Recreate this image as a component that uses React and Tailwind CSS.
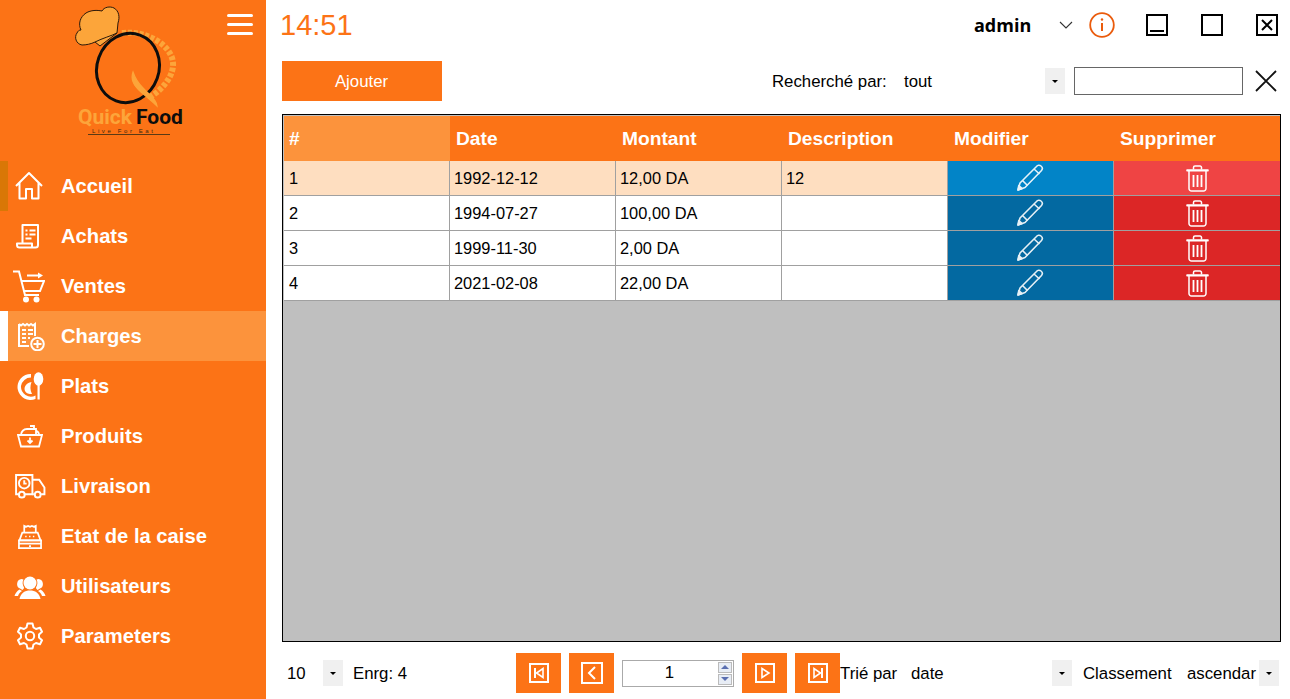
import React from "react";

const S = ({ children, w = 32, h = 32, vb = "0 0 32 32", sw = 2 }) => (
  <svg width={w} height={h} viewBox={vb} fill="none" stroke="white" strokeWidth={sw} strokeLinejoin="round">{children}</svg>
);

const Home = () => (
  <S vb="1 0 32 32"><path d="M3 16 L16 3 L29 16 M6.5 13 V28.5 H13 V19 H19 V28.5 H25.5 V13" /></S>
);
const Receipt = () => (
  <S vb="1.5 0 32 32">
    <path d="M10 23 V5 H25.5 V25 a2.5 2.5 0 0 1 -2.5 2.5 H7 a2.5 2.5 0 0 1 -2.5 -2.5 V23.5 H19.5 V27" />
    <path d="M13 10.5 h2 M17 10.5 h6 M13 14.5 h2 M17 14.5 h6 M13 18.5 h6" />
  </S>
);
const Cart = () => (
  <svg width="32" height="33" viewBox="0 0 32 33" fill="none" stroke="white" strokeWidth="2" className="mr-[3px]">
    <path d="M0 1.5 H6 L12 25 H26" />
    <path d="M8 11 H31 L27 21 H10.5" />
    <circle cx="13" cy="29.5" r="3" fill="white" stroke="none" />
    <circle cx="23.5" cy="29.5" r="3" fill="white" stroke="none" />
    <path d="M14 5.5 H25" />
    <path d="M25 2.5 L30 5.5 L25 8.5 Z" fill="white" stroke="none" />
  </svg>
);
const Charges = () => (
  <svg width="27" height="29" viewBox="0 0 27 29" fill="none" stroke="white" strokeWidth="2" className="ml-[3px]">
    <path d="M1 2 l2 1.5 l2 -1.5 l2 1.5 l2 -1.5 l2 1.5 l2 -1.5 l2 1.5 l2 -1.5 V14 M11 24 H1 V2" />
    <path d="M4 8 h4 M10 8 h5 M4 12 h4 M10 12 h5 M4 16 h4 M10 16 h2 M4 20 h4" />
    <circle cx="19.5" cy="22" r="6.3" />
    <path d="M19.5 18 v8 M15.5 22 h8" />
  </svg>
);
const Plats = () => (
  <svg width="27" height="28" viewBox="0 0 27 28" fill="white">
    <path d="M14 2 A13 13 0 1 0 18.5 27 L18.5 23.5 A10 10 0 0 1 4 14 A10 10 0 0 1 14 5.5 Z" />
    <path d="M14.5 10 C9 11 6.5 15 8 19 C9 21.5 12 22 15 22 C13 18 13 14 14.5 10 Z" />
    <ellipse cx="21.5" cy="7" rx="4.8" ry="6.8" />
    <rect x="20.5" y="13" width="2.2" height="14.5" />
  </svg>
);
const Produits = () => (
  <svg width="26" height="24" viewBox="0 0 26 24" fill="none" stroke="white" strokeWidth="1.8">
    <path d="M1 11 H25 L22 22.5 H4 Z" />
    <path d="M4 11 A6 6 0 0 1 10 5 M10 5 H19 V11 M13 2 H17 V5 M22 11 A5 5 0 0 0 19 6.5" />
    <path d="M13 13.5 V19 M10.5 16.5 L13 19 L15.5 16.5" />
  </svg>
);
const Livraison = () => (
  <svg width="31" height="25" viewBox="0 0 32 26" fill="none" stroke="white" strokeWidth="2">
    <path d="M5 21 H1 V1 H18 V21 H9" />
    <path d="M18 6 H25 L30.5 14 V21 H27 M18 21 H19.5" />
    <circle cx="7" cy="21.5" r="3" />
    <circle cx="23.5" cy="21.5" r="3" />
    <circle cx="9.5" cy="9.5" r="5.5" />
    <path d="M9.5 6.5 V10 H12" />
  </svg>
);
const Caisse = () => (
  <svg width="26" height="25" viewBox="0 0 26 26" fill="none" stroke="white" strokeWidth="1.8">
    <path d="M7 9 V2 l2 1 l2 -1 l2 1 l2 -1 l2 1 l2 -1 V9" />
    <path d="M5 9 H21 L24 17 H2 Z" />
    <path d="M1.5 17 H24.5 V25 H1.5 Z M1.5 20.5 H24.5" />
    <path d="M8 13 h1.5 M12 13 h1.5 M16 13 h1.5" />
    <path d="M12 23 h2" />
  </svg>
);
const Users = () => (
  <svg width="32" height="24" viewBox="0 0 32 24" fill="white" className="mr-[1px] mt-[3px]">
    <circle cx="16" cy="7" r="6.5" />
    <path d="M5.5 23 C6.5 17 11 14.5 16 14.5 C21 14.5 25.5 17 26.5 23 Z" />
    <path d="M7.5 3 A5 5 0 0 0 6 12.5 L8.5 14 C10 12.5 10 12 10 11.5 C8.5 9 8 6 9.5 3.5 Z" />
    <path d="M24.5 3 A5 5 0 0 1 26 12.5 L23.5 14 C22 12.5 22 12 22 11.5 C23.5 9 24 6 22.5 3.5 Z" />
    <path d="M5.5 13.5 L8 15 C5.5 16.5 4.5 18.5 4 20 H0.5 C1 17.5 3 15 5.5 13.5 Z" />
    <path d="M26.5 13.5 L24 15 C26.5 16.5 27.5 18.5 28 20 H31.5 C31 17.5 29 15 26.5 13.5 Z" />
  </svg>
);
const Gear = () => (
  <svg width="26" height="28" viewBox="0 0 26 28" fill="none" stroke="white" strokeWidth="2" strokeLinejoin="round" className="mr-[1px]">
    <path d="M10.5 1.5 H15.5 L16.5 5.5 L19 7 L23 5.8 L25 9.8 L22 12.5 V15.5 L25 18.2 L23 22.2 L19 21 L16.5 22.5 L15.5 26.5 H10.5 L9.5 22.5 L7 21 L3 22.2 L1 18.2 L4 15.5 V12.5 L1 9.8 L3 5.8 L7 7 L9.5 5.5 Z" />
    <circle cx="13" cy="14" r="4.2" />
  </svg>
);
const Pencil = () => (
  <svg width="28" height="28" viewBox="0 0 28 28" fill="none" stroke="white" strokeWidth="1.6" strokeLinejoin="round" className="opacity-90 mr-[2px]">
    <path d="M20.5 2.5 a3 3 0 0 1 5 4 L9 23.5 L2 26 L4 19 Z" />
    <path d="M18 5 L23.5 10 M6.5 16.5 L11.5 21.5" />
    <path d="M2 26 L2.8 21.5 L6.2 24.5 Z" fill="white" />
  </svg>
);
const Trash = () => (
  <svg width="23" height="27" viewBox="0 0 23 27" fill="none" stroke="white" strokeWidth="1.5" strokeLinejoin="round">
    <path d="M1 5 H22 V5.8 H1 Z" />
    <path d="M7.5 4.5 V2.5 a1.5 1.5 0 0 1 1.5 -1.5 H14 a1.5 1.5 0 0 1 1.5 1.5 V4.5" />
    <path d="M3 6 V23.5 a2.5 2.5 0 0 0 2.5 2.5 H17.5 a2.5 2.5 0 0 0 2.5 -2.5 V6" />
    <path d="M7.5 10 V22 M11.5 10 V22 M15.5 10 V22" strokeWidth="1.8" />
  </svg>
);

const Logo = () => (
  <div className="relative h-[161px]">
    <svg className="absolute left-0 top-0" width="200" height="110" viewBox="0 0 200 110">
      <path d="M122 33 C148 30 172 46 173 63 C174 76 162 90 150 97" fill="none" stroke="#fca53a" strokeWidth="6" strokeDasharray="4 1.8" />
      <ellipse cx="128" cy="68" rx="31" ry="35" fill="none" stroke="#0d0d0d" strokeWidth="3" transform="rotate(20 128 68)" />
      <path d="M133 72 C130 80 134 86 141 92 C148 98 152 101 157 106 C156 98 148 94 143 88 C138 83 135 78 133 72 Z" fill="#fca53a" stroke="#fca53a" strokeWidth="1.2" />
      <path d="M82 45 C76 44 74 37 77 33 C78 31 79 30 81 30 C78 24 80 17 86 13 C91 10 97 10 102 11 C104 7 110 6 114 8 C119 11 120 17 118 23 L117 33 L100 46 L95 42 C91 44 86 45 82 45 Z" fill="#fca53a" stroke="#2b1a0a" strokeWidth="1" />
      <path d="M95 42 C103 38 111 36 117 33" fill="none" stroke="#2b1a0a" strokeWidth="1" />
    </svg>
    <div className="absolute left-[78px] top-[108px] flex h-[19px] items-center gap-[4px] font-['Roboto',sans-serif] text-[21px] leading-[19px] font-bold">
      <span className="text-[#fca53a]">Quick</span>
      <span className="text-[#0d0d0d]">Food</span>
    </div>
    <div className="absolute left-[92px] top-[128px] font-['Liberation_Sans',sans-serif] text-[6px] leading-[6px] tracking-[2.6px] text-[#3a2a10]">Live For Eat</div>
    <div className="absolute left-[88px] top-[134px] h-px w-[82px] bg-[#5a3a15]" />
    <div className="absolute left-[227px] top-[14px] flex flex-col gap-[6.3px]">
      <div className="h-[2.7px] w-[26px] rounded-full bg-white" />
      <div className="h-[2.7px] w-[26px] rounded-full bg-white" />
      <div className="h-[2.7px] w-[26px] rounded-full bg-white" />
    </div>
  </div>
);

const menu = [
  ["Accueil", Home, "bg-[#d97706]", ""],
  ["Achats", Receipt, "", ""],
  ["Ventes", Cart, "", ""],
  ["Charges", Charges, "bg-white", "bg-[#fc933c]"],
  ["Plats", Plats, "", ""],
  ["Produits", Produits, "", ""],
  ["Livraison", Livraison, "", ""],
  ["Etat de la caise", Caisse, "", ""],
  ["Utilisateurs", Users, "", ""],
  ["Parameters", Gear, "", ""],
];

const Sidebar = () => (
  <aside className="h-[699px] w-[266px] shrink-0 bg-[#fc7316]">
    <Logo />
    {menu.map(([t, Icon, stripe, bg]) => (
      <div key={t} className={`flex h-[50px] ${bg}`}>
        <div className={`h-full w-[8px] ${stripe}`} />
        <div className="flex w-[44px] items-center justify-center">
          <Icon />
        </div>
        <div className="flex items-center pl-[9px] font-['Liberation_Sans',sans-serif] text-[20.2px] font-bold text-white">{t}</div>
      </div>
    ))}
  </aside>
);

const Drop = ({ className = "" }) => (
  <div className={`flex h-[26px] w-[20px] shrink-0 items-center justify-center bg-[#f0f0f0] ${className}`}>
    <div className="h-0 w-0 border-x-[3px] border-t-[3px] border-x-transparent border-t-black" />
  </div>
);

const Win = ({ children, cls = "" }) => (
  <svg width="22" height="22" viewBox="0 0 22 22" fill="none" stroke="black" strokeWidth="2" className={cls}>
    <rect x="1" y="1" width="20" height="20" />
    {children}
  </svg>
);

const TopBar = () => (
  <div className="flex h-[50px] items-center font-['Liberation_Sans',sans-serif]">
    <div className="-ml-[2px] w-[694px] text-[29px] leading-none text-[#fc7316]">14:51</div>
    <div className="w-[85px] font-['Open_Sans',sans-serif] text-[18px] font-bold text-black">admin</div>
    <svg width="14" height="8" viewBox="0 0 14 8" fill="none" stroke="#333" strokeWidth="1.1"><path d="M1 1 L7 7 L13 1" /></svg>
    <svg width="26" height="26" viewBox="0 0 26 26" fill="none" className="ml-[16px]">
      <circle cx="13" cy="13" r="11.8" stroke="#ea5b0c" strokeWidth="1.8" />
      <path d="M13 11 V19" stroke="#ea5b0c" strokeWidth="2" />
      <circle cx="13" cy="7.5" r="1.2" fill="#ea5b0c" />
    </svg>
    <Win cls="ml-[31px]"><path d="M4 17 H18" /></Win>
    <Win cls="ml-[33px]" />
    <Win cls="ml-[33px]"><path d="M6 6 L16 16 M16 6 L6 16" /></Win>
  </div>
);

const Toolbar = () => (
  <div className="mt-[11px] flex h-[40px] items-center font-['Liberation_Sans',sans-serif] text-[16.8px] text-black">
    <div className="flex h-[40px] w-[160px] items-center justify-center bg-[#fc7316] pt-[1px] pr-[1px] text-white">Ajouter</div>
    <div className="ml-[330px] w-[132px] pt-[1px]">Recherché par:</div>
    <div className="w-[141px] pt-[1px]">tout</div>
    <Drop />
    <div className="ml-[9px] h-[28px] w-[169px] border border-[#666] bg-white" />
    <svg width="22" height="22" viewBox="0 0 22 22" stroke="#111" strokeWidth="1.8" className="ml-[12px]"><path d="M1 1 L21 21 M21 1 L1 21" /></svg>
  </div>
);

const rows = [
  ["1", "1992-12-12", "12,00 DA", "12"],
  ["2", "1994-07-27", "100,00 DA", ""],
  ["3", "1999-11-30", "2,00 DA", ""],
  ["4", "2021-02-08", "22,00 DA", ""],
];
const cols = ["#", "Date", "Montant", "Description", "Modifier", "Supprimer"];

const Table = () => (
  <div className="mt-[13px] min-h-0 w-[999px] flex-1 border border-black bg-[#bfbfbf] p-px font-['Liberation_Sans',sans-serif]">
    <div className="grid grid-cols-[166px_166px_166px_166px_166px_166px]">
      {cols.map((c, i) => (
        <div key={c} className={`flex h-[45px] items-center pt-[1px] text-[19.2px] font-bold text-white ${i === 0 ? "bg-[#fc933c] pl-[5px]" : "bg-[#fc7316] pl-[6px]"}`}>{c}</div>
      ))}
      {rows.map((r, ri) => (
        <React.Fragment key={r[0]}>
          {r.map((v, ci) => (
            <div key={ci} className={`flex h-[35px] items-center border-r border-b border-[#a0a0a0] pt-[1px] text-[16.4px] text-black ${ci === 0 ? "pl-[5px]" : "pl-[4px]"} ${ri === 0 ? "bg-[#fedec0]" : "bg-white"}`}>{v}</div>
          ))}
          <div className={`flex h-[35px] items-center justify-center border-r border-b border-[#a0a0a0] ${ri === 0 ? "bg-[#0284c7]" : "bg-[#0369a1]"}`}><Pencil /></div>
          <div className={`flex h-[35px] items-center justify-center border-b border-[#a0a0a0] ${ri === 0 ? "bg-[#ef4444]" : "bg-[#dc2626]"}`}><Trash /></div>
        </React.Fragment>
      ))}
    </div>
  </div>
);

const NavBtn = ({ children, className = "" }) => (
  <div className={`flex h-[40px] w-[45px] shrink-0 items-center justify-center bg-[#fc7316] ${className}`}>{children}</div>
);
const First = () => (
  <svg width="20" height="20" viewBox="0 0 20 20" fill="none" stroke="white" strokeWidth="2"><rect x="1" y="1" width="18" height="18" /><path d="M6 5 V15" /><path d="M14 5.5 V14.5 L7.5 10 Z" strokeWidth="1.6" /></svg>
);
const Prev = () => (
  <svg width="22" height="22" viewBox="0 0 22 22" fill="none" stroke="white" strokeWidth="2"><rect x="1" y="1" width="20" height="20" /><path d="M14 5 L8 11 L14 17" /></svg>
);
const Next = () => (
  <svg width="20" height="20" viewBox="0 0 20 20" fill="none" stroke="white" strokeWidth="2"><rect x="1" y="1" width="18" height="18" /><path d="M7 5.5 V14.5 L14 10 Z" strokeWidth="1.6" /></svg>
);
const Last = () => (
  <svg width="20" height="20" viewBox="0 0 20 20" fill="none" stroke="white" strokeWidth="2"><rect x="1" y="1" width="18" height="18" /><path d="M14 5 V15" /><path d="M6 5.5 V14.5 L12.5 10 Z" strokeWidth="1.6" /></svg>
);

const Spinner = () => (
  <div className="ml-[8px] flex h-[27px] w-[112px] shrink-0 items-center border border-[#aaa] bg-white">
    <div className="flex-1 pl-[-2px] pr-[2px] text-center">1</div>
    <div className="mr-px flex flex-col gap-px">
      <div className="flex h-[11px] w-[14px] items-center justify-center border border-[#bbb] bg-[#e8edf5]"><div className="h-0 w-0 border-x-[4px] border-b-[4px] border-x-transparent border-b-[#5a6fb0]" /></div>
      <div className="flex h-[11px] w-[14px] items-center justify-center border border-[#bbb] bg-[#e8edf5]"><div className="h-0 w-0 border-x-[4px] border-t-[4px] border-x-transparent border-t-[#5a6fb0]" /></div>
    </div>
  </div>
);

const Footer = () => (
  <div className="flex h-[57px] items-start pt-[11px] font-['Liberation_Sans',sans-serif] text-[16.8px] text-black">
    <div className="flex h-[40px] items-center">
      <div className="w-[41px] pl-[5px] pt-[1px]">10</div>
      <Drop />
      <div className="ml-[10px] w-[164px] pt-[1px]">Enrg: 4</div>
    </div>
    <NavBtn className="-ml-[1px]"><First /></NavBtn>
    <NavBtn className="ml-[8px]"><Prev /></NavBtn>
    <div className="flex h-[40px] items-center"><Spinner /></div>
    <NavBtn className="ml-[8px]"><Next /></NavBtn>
    <NavBtn className="ml-[8px]"><Last /></NavBtn>
    <div className="flex h-[40px] items-center">
      <div className="w-[71px] pt-[1px]">Trié par</div>
      <div className="w-[141px] pt-[1px]">date</div>
      <Drop />
      <div className="ml-[11px] w-[104px] pt-[1px]">Classement</div>
      <div className="w-[72px] pt-[1px]">ascendar</div>
      <Drop />
    </div>
  </div>
);

export default function App() {
  return (
    <div className="flex h-[699px] w-[1290px] overflow-hidden bg-white">
      <Sidebar />
      <main className="flex h-[699px] min-w-0 flex-1 flex-col pl-[16px]">
        <TopBar />
        <Toolbar />
        <Table />
        <Footer />
      </main>
    </div>
  );
}
